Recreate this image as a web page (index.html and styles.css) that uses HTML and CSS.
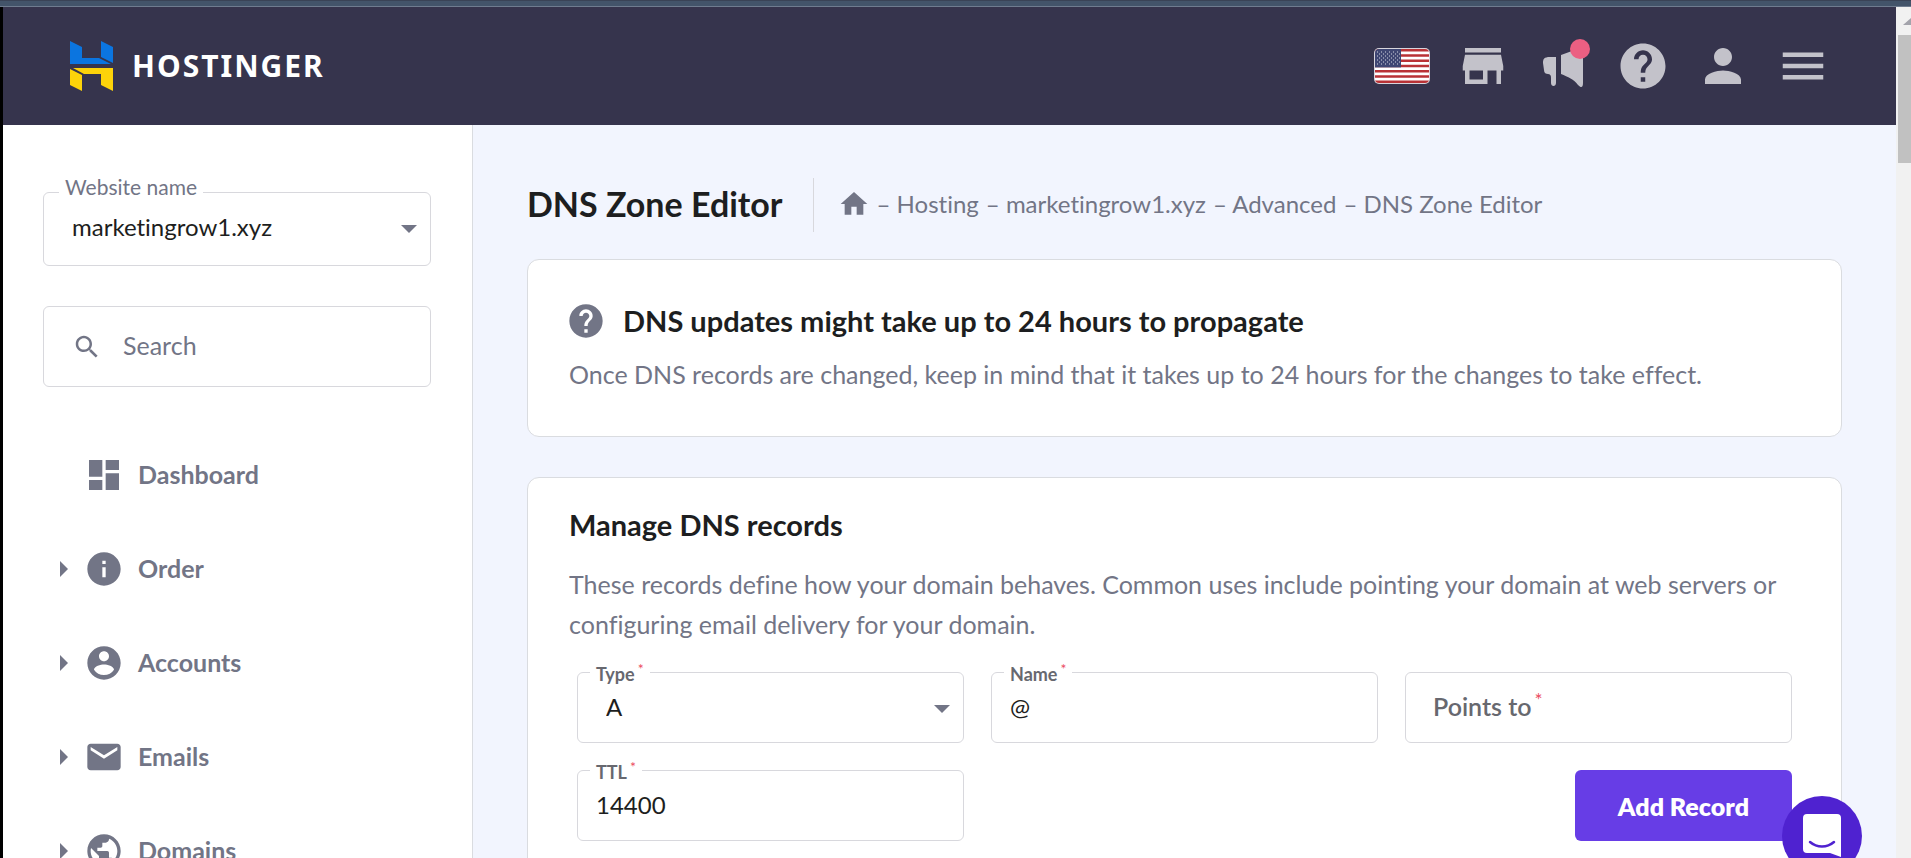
FILE: index.html
```html
<!DOCTYPE html>
<html lang="en">
<head>
  <meta charset="UTF-8">
  <meta name="viewport" content="width=device-width, initial-scale=1.0">
  <title>DNS Zone Editor</title>
  <link rel="stylesheet" href="styles.css">
</head>
<body>
  <div class="top-strip"></div>

  <div class="window">
    <div class="app">
      <!-- Header -->
      <header class="header">
        <a href="#" class="logo">
          <svg width="44" height="50" viewBox="0 0 44 50">
            <path fill="#0b75e0" d="M0 0l12 6v11h17l12 6H0z M31 0l12 6v16l-12-6z"/>
            <path fill="#fdd30a" d="M3 27h40v23l-12-6V33H14z M0 28l12 6v16L0 44z"/>
          </svg>
          <span>HOSTINGER</span>
        </a>
        <div class="header-icons">
          <button class="flag-btn" aria-label="Language">
            <svg width="56" height="36" viewBox="0 0 56 36">
              <defs><clipPath id="flag"><rect x="1" y="1" width="54" height="34" rx="4"/></clipPath></defs>
              <rect width="56" height="36" rx="5" fill="#d8d5dc"/>
              <g clip-path="url(#flag)">
                <rect width="56" height="36" fill="#fff"/>
                <path stroke="#b93236" stroke-width="2.6" d="M0 2.3h56M0 7.5h56M0 12.8h56M0 18h56M0 23.2h56M0 28.5h56M0 33.7h56"/>
                <rect width="27" height="19.4" fill="#3f4673"/>
                <path stroke="#d5d6e2" stroke-width="1" stroke-dasharray="1 3" d="M3 4h23M5 6h21M3 8h23M5 10h21M3 12h23M5 14h21M3 16h23"/>
              </g>
            </svg>
          </button>
          <button class="icon-btn" aria-label="Store">
            <svg viewBox="0 0 24 24"><path d="M20 4H4v2h16V4zm1 10v-2l-1-5H4l-1 5v2h1v6h10v-6h4v6h2v-6h1zm-9 4H6v-4h6v4z"/></svg>
          </button>
          <button class="icon-btn" aria-label="News">
            <svg viewBox="0 0 54 54"><path d="M20 18h-6c-6 0-7 2-7 6l1 7c0 3 2 4 4 4s3 1 3 4v5c0 4 5 4 5 0z M25 16l22-8v36c0 5-2 5-5 2-4-6-10-8-17-11z"/></svg>
            <span class="badge"></span>
          </button>
          <button class="icon-btn" aria-label="Help">
            <svg viewBox="0 0 24 24"><path d="M12 2C6.480 2 2 6.480 2 12s4.480 10 10 10 10-4.480 10-10S17.520 2 12 2zm1 17h-2v-2h2v2zm2.070-7.750l-.9.920C13.450 12.900 13 13.500 13 15h-2v-.5c0-1.100.450-2.100 1.170-2.830l1.240-1.260c.370-.360.590-.860.590-1.410 0-1.100-.9-2-2-2s-2 .9-2 2H8c0-2.210 1.790-4 4-4s4 1.790 4 4c0 .880-.360 1.680-.930 2.250z"/></svg>
          </button>
          <button class="icon-btn" aria-label="Profile">
            <svg viewBox="0 0 24 24"><path d="M12 12c2.210 0 4-1.790 4-4s-1.790-4-4-4-4 1.790-4 4 1.790 4 4 4zm0 2c-2.670 0-8 1.340-8 4v2h16v-2c0-2.660-5.330-4-8-4z"/></svg>
          </button>
          <button class="icon-btn" aria-label="Menu">
            <svg viewBox="0 0 24 24"><path d="M3 18h18v-2H3v2zm0-5h18v-2H3v2zm0-7v2h18V6H3z"/></svg>
          </button>
        </div>
      </header>

      <div class="body">
        <!-- Sidebar -->
        <aside class="sidebar">
          <div class="field site-field select-field">
            <label for="website">Website name</label>
            <select id="website">
              <option>marketingrow1.xyz</option>
            </select>
          </div>

          <div class="search-box">
            <svg viewBox="0 0 24 24"><path d="M15.500 14h-.790l-.280-.270C15.410 12.590 16 11.110 16 9.500 16 5.910 13.090 3 9.500 3S3 5.910 3 9.500 5.910 16 9.500 16c1.610 0 3.090-.590 4.230-1.570l.270.280v.790l5 4.990L20.490 19l-4.990-5zm-6 0C7.010 14 5 11.990 5 9.500S7.010 5 9.500 5 14 7.010 14 9.500 11.990 14 9.500 14z"/></svg>
            <input type="text" placeholder="Search" aria-label="Search">
          </div>

          <nav class="nav">
            <a href="#" class="nav-item no-arrow">
              <svg viewBox="0 0 24 24"><path d="M3 13h8V3H3v10zm0 8h8v-6H3v6zm10 0h8V11h-8v10zm0-18v6h8V3h-8z"/></svg>
              <span>Dashboard</span>
            </a>
            <a href="#" class="nav-item">
              <svg viewBox="0 0 24 24"><path d="M12 2C6.480 2 2 6.480 2 12s4.480 10 10 10 10-4.480 10-10S17.520 2 12 2zm1 15h-2v-6h2v6zm0-8h-2V7h2v2z"/></svg>
              <span>Order</span>
            </a>
            <a href="#" class="nav-item">
              <svg viewBox="0 0 24 24"><path d="M12 2C6.480 2 2 6.480 2 12s4.480 10 10 10 10-4.480 10-10S17.520 2 12 2zm0 3c1.660 0 3 1.340 3 3s-1.340 3-3 3-3-1.340-3-3 1.340-3 3-3zm0 14.200c-2.500 0-4.710-1.280-6-3.220.030-1.990 4-3.080 6-3.080 1.990 0 5.970 1.090 6 3.080-1.290 1.940-3.500 3.220-6 3.220z"/></svg>
              <span>Accounts</span>
            </a>
            <a href="#" class="nav-item">
              <svg viewBox="0 0 24 24"><path d="M20 4H4c-1.100 0-1.990.9-1.990 2L2 18c0 1.100.9 2 2 2h16c1.100 0 2-.9 2-2V6c0-1.100-.9-2-2-2zm0 4l-8 5-8-5V6l8 5 8-5v2z"/></svg>
              <span>Emails</span>
            </a>
            <a href="#" class="nav-item">
              <svg viewBox="0 0 24 24"><path d="M12 2C6.480 2 2 6.480 2 12s4.480 10 10 10 10-4.480 10-10S17.520 2 12 2zm-1 17.930c-3.950-.490-7-3.850-7-7.930 0-.620.080-1.210.210-1.790L9 15v1c0 1.100.9 2 2 2v1.930zm6.900-2.540c-.260-.810-1-1.390-1.900-1.390h-1v-3c0-.550-.450-1-1-1H8v-2h2c.550 0 1-.450 1-1V7h2c1.100 0 2-.9 2-2v-.410c2.930 1.190 5 4.060 5 7.410 0 2.080-.8 3.970-2.100 5.390z"/></svg>
              <span>Domains</span>
            </a>
          </nav>
        </aside>

        <!-- Main content -->
        <main class="main">
          <div class="page-title">
            <h1>DNS Zone Editor</h1>
            <div class="breadcrumb">
              <a href="#" aria-label="Home"><svg viewBox="0 0 24 24"><path d="M10 20v-6h4v6h5v-8h3L12 3 2 12h3v8z"/></svg></a>
              <a href="#">– Hosting</a>
              <a href="#">– marketingrow1.xyz</a>
              <a href="#">– Advanced</a>
              <span>– DNS Zone Editor</span>
            </div>
          </div>

          <section class="card notice">
            <div class="notice-title">
              <svg viewBox="0 0 24 24"><path d="M12 2C6.480 2 2 6.480 2 12s4.480 10 10 10 10-4.480 10-10S17.520 2 12 2zm1 17h-2v-2h2v2zm2.070-7.750l-.9.920C13.450 12.900 13 13.500 13 15h-2v-.5c0-1.100.450-2.100 1.170-2.830l1.240-1.260c.370-.360.590-.860.590-1.410 0-1.100-.9-2-2-2s-2 .9-2 2H8c0-2.210 1.790-4 4-4s4 1.790 4 4c0 .880-.360 1.680-.930 2.250z"/></svg>
              <h2>DNS updates might take up to 24 hours to propagate</h2>
            </div>
            <p>Once DNS records are changed, keep in mind that it takes up to 24 hours for the changes to take effect.</p>
          </section>

          <section class="card records">
            <h2>Manage DNS records</h2>
            <p>These records define how your domain behaves. Common uses include pointing your domain at web servers or configuring email delivery for your domain.</p>
            <form class="record-form">
              <div class="field select-field">
                <label for="type">Type<sup>*</sup></label>
                <select id="type">
                  <option>A</option>
                </select>
              </div>
              <div class="field">
                <label for="name">Name<sup>*</sup></label>
                <input type="text" id="name" value="@">
              </div>
              <div class="field empty">
                <label for="points">Points to<sup>*</sup></label>
                <input type="text" id="points">
              </div>
              <div class="field">
                <label for="ttl">TTL<sup>*</sup></label>
                <input type="text" id="ttl" value="14400">
              </div>
              <button type="button" class="add-record">Add Record</button>
            </form>
          </section>
        </main>
      </div>
    </div>

    <!-- Scrollbar -->
    <div class="scrollbar">
      <div class="scroll-arrow"></div>
      <div class="scroll-thumb"></div>
    </div>
  </div>

  <button class="chat" aria-label="Chat">
    <svg width="38" height="46" viewBox="0 0 38 46">
      <path fill="#fff" d="M4 0h30a4 4 0 0 1 4 4v39l-11-4H4a4 4 0 0 1-4-4V4a4 4 0 0 1 4-4z"/>
      <path fill="none" stroke="#4f22d0" stroke-width="2.500" stroke-linecap="round" d="M7 28c7 6 17 6 24 0"/>
    </svg>
  </button>
</body>
</html>
```
FILE: styles.css
```css
/* General Styling */
* {
  box-sizing: border-box;
}

body {
  margin: 0;
  height: 100vh;
  overflow: hidden;
  display: flex;
  flex-direction: column;
  font-family: Lato, sans-serif;
  font-size: 24px;
  font-variant-ligatures: none;
  color: #1d1e20;
  background: #f2f5fe;
}

h1, h2, p {
  margin: 0;
}

a {
  color: inherit;
  text-decoration: none;
}

button, input, select {
  font: inherit;
  color: inherit;
  border: none;
  background: none;
  padding: 0;
}

svg {
  display: block;
  fill: #727586;
  flex-shrink: 0;
}

.top-strip {
  height: 7px;
  flex-shrink: 0;
  background: #43546a;
  border-top: 1px solid #3a4356;
  border-bottom: 1px solid #6f7c8f;
}

.window {
  flex: 1;
  min-height: 0;
  display: flex;
  border-left: 3px solid #000;
}

.app {
  flex: 1;
  min-width: 0;
  overflow: hidden;
}

/* Header */
.header {
  display: flex;
  justify-content: space-between;
  align-items: center;
  height: 118px;
  padding: 0 66px 0 67px;
  background: #36344d;
}

.logo {
  display: flex;
  align-items: center;
  gap: 18px;
  font-family: "Noto Sans", sans-serif;
  font-size: 30px;
  line-height: 50px;
  font-weight: 700;
  letter-spacing: 2px;
  color: #fff;
}

.header-icons {
  display: flex;
  align-items: center;
  gap: 26px;
}

.icon-btn {
  position: relative;
  width: 54px;
  height: 54px;
}

.icon-btn svg {
  fill: #c3c2ca;
}

.badge {
  position: absolute;
  top: 0;
  right: 0;
  width: 20px;
  height: 20px;
  border-radius: 50%;
  background: #eb5f82;
}

/* Sidebar */
.body {
  display: flex;
}

.sidebar {
  width: 470px;
  flex-shrink: 0;
  padding: 67px 41px 0 40px;
  background: #fff;
  border-right: 1px solid #dadce0;
}

.field {
  position: relative;
  height: 71px;
  border: 1px solid #d8d8dd;
  border-radius: 6px;
  background: #fff;
}

.field label {
  position: absolute;
  top: -11px;
  left: 12px;
  padding: 0 6px;
  font-size: 18px;
  line-height: 24px;
  font-weight: 700;
  color: #67686f;
  background: #fff;
}

.field sup {
  margin-left: 3px;
  font-size: 14px;
  font-weight: 400;
  line-height: 0;
  color: #eb4b5f;
}

.field input,
.field select {
  width: 100%;
  height: 100%;
  padding: 0 18px 2px;
  outline: none;
}

.field select {
  appearance: none;
  padding: 0 28px 2px;
}

.select-field::after {
  content: "";
  position: absolute;
  top: 32px;
  right: 13px;
  border: 8px solid transparent;
  border-top-color: #727586;
  border-bottom: none;
  pointer-events: none;
}

.site-field {
  height: 74px;
}

.site-field select {
  padding-bottom: 6px;
}

.site-field label {
  top: -18px;
  left: 15px;
  font-size: 21px;
  font-weight: 400;
  color: #727586;
}

.search-box {
  display: flex;
  align-items: center;
  gap: 21px;
  height: 81px;
  margin-top: 40px;
  padding: 0 28px;
  border: 1px solid #d8d8dd;
  border-radius: 6px;
}

.search-box svg {
  width: 30px;
}

.search-box input {
  flex: 1;
  min-width: 0;
  padding-bottom: 4px;
  font-size: 25px;
  outline: none;
}

.search-box input::placeholder {
  color: #727586;
}

.nav {
  display: flex;
  flex-direction: column;
  margin-top: 41px;
}

.nav-item {
  display: flex;
  align-items: center;
  gap: 14px;
  height: 94px;
  padding-left: 17px;
  font-size: 25px;
  font-weight: 700;
  color: #727586;
}

.nav-item span {
  padding-bottom: 2px;
}

.nav-item svg {
  width: 40px;
}

.nav-item::before {
  content: "";
  margin-right: 2px;
  border: 8px solid transparent;
  border-left-color: #727586;
  border-right: none;
}

.no-arrow::before {
  visibility: hidden;
}

/* Main content */
.main {
  flex: 1;
  min-width: 0;
  padding: 53px 54px 40px;
}

.page-title {
  display: flex;
  align-items: center;
  height: 54px;
  margin-bottom: 27px;
}

h1 {
  padding: 0 30px 4px 0;
  font-size: 34px;
  font-weight: 700;
}

.breadcrumb {
  display: flex;
  align-items: center;
  align-self: stretch;
  gap: 7px;
  padding: 0 0 3px 24px;
  border-left: 1px solid #d8d8dd;
  color: #727586;
}

.breadcrumb svg {
  width: 32px;
}

.card {
  padding: 0 41px;
  border: 1px solid #dadce0;
  border-radius: 12px;
  background: #fff;
}

h2 {
  font-size: 29px;
  line-height: 38px;
  font-weight: 700;
}

.card p {
  font-size: 25px;
  line-height: 40px;
  color: #727586;
}

.notice {
  padding-top: 41px;
  padding-bottom: 42px;
  margin-bottom: 40px;
}

.notice-title {
  display: flex;
  align-items: center;
  gap: 17px;
  margin-bottom: 13px;
}

.notice-title svg {
  width: 40px;
  margin-left: -3px;
}

.records {
  padding-top: 28px;
  padding-bottom: 60px;
}

.records h2 {
  margin-bottom: 20px;
}

.record-form {
  display: grid;
  grid-template-columns: repeat(3, 1fr);
  gap: 27px;
  margin-top: 28px;
  padding: 0 8px;
}

.field.empty label {
  top: 15px;
  left: 21px;
  font-size: 25px;
  line-height: 36px;
  font-weight: 600;
}

.field.empty sup {
  font-size: 19px;
}

.add-record {
  grid-column: 3;
  justify-self: end;
  padding: 0 43px;
  border-radius: 6px;
  font-size: 25px;
  font-weight: 800;
  color: #fff;
  background: #673de6;
}

/* Scrollbar */
.scrollbar {
  width: 15px;
  background: #f1f1f1;
  overflow: hidden;
}

.scroll-arrow {
  width: 0;
  margin: 11px 0 10px 7px;
  border: 8px solid transparent;
  border-bottom: 7px solid #a3a3ab;
  border-top: none;
}

.scroll-thumb {
  height: 128px;
  margin-left: 2px;
  background: #c1c1c1;
}

/* Chat button */
.chat {
  position: fixed;
  right: 49px;
  bottom: -18px;
  display: flex;
  justify-content: center;
  width: 80px;
  height: 80px;
  padding-top: 18px;
  border-radius: 50%;
  background: #4f22d0;
}
```
